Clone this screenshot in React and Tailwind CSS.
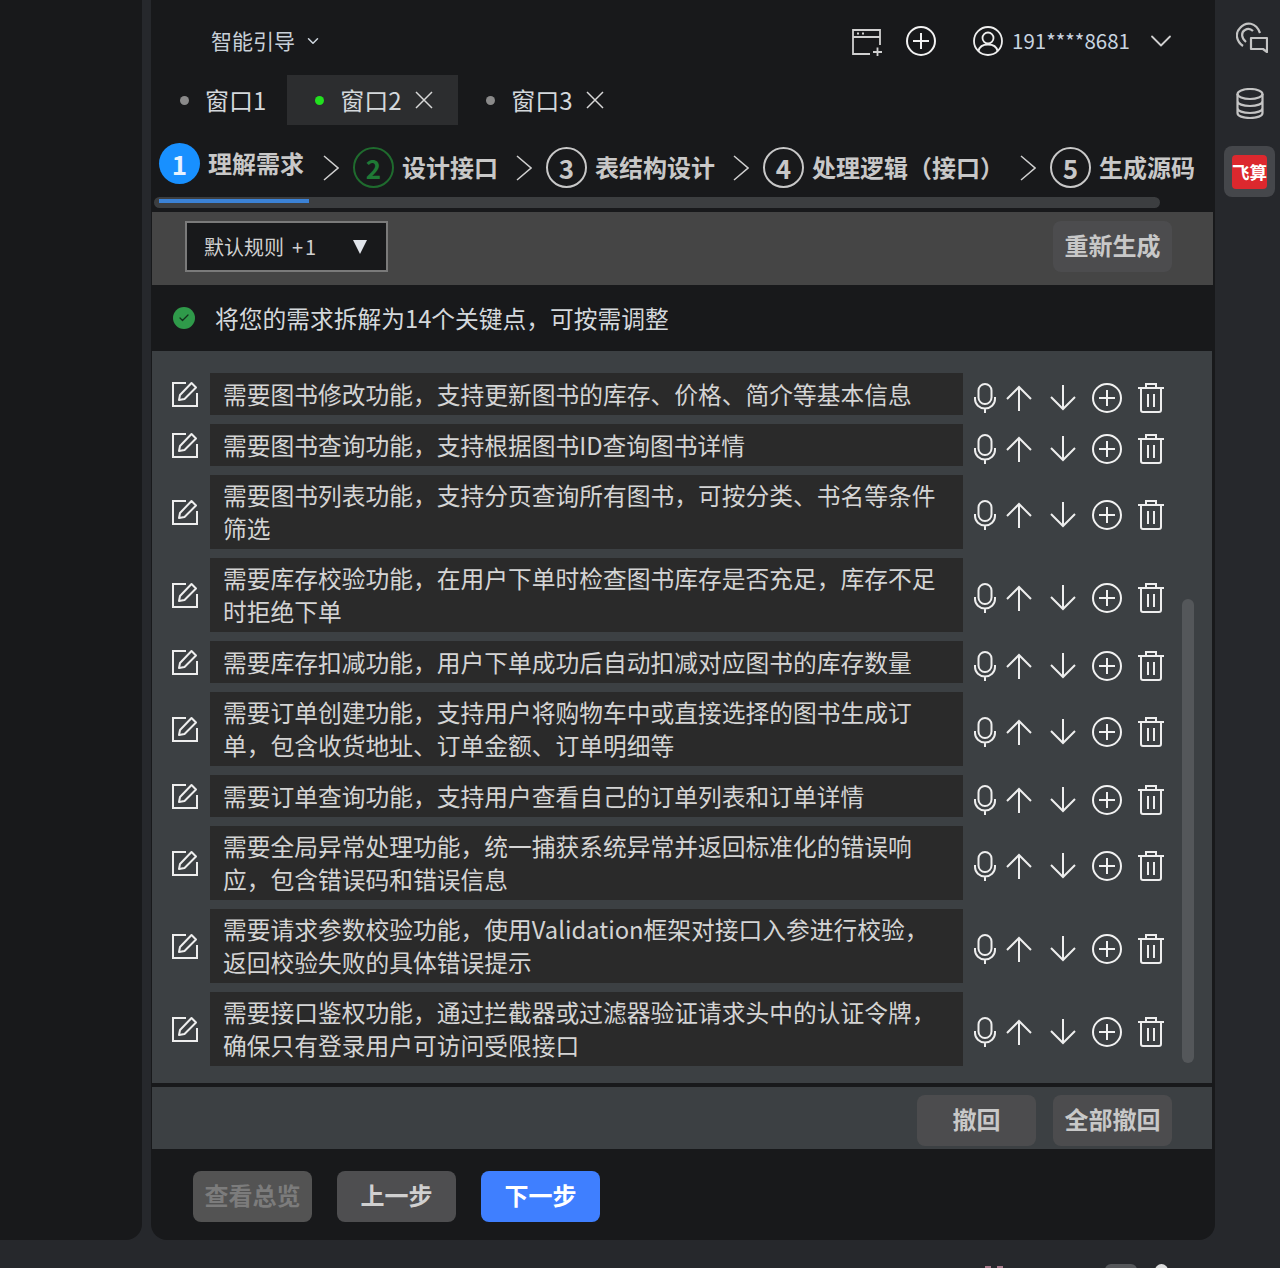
import { ChevronDown, Check } from 'lucide-react';

const steps = [
  { n: 1, label: '理解需求' },
  { n: 2, label: '设计接口' },
  { n: 3, label: '表结构设计' },
  { n: 4, label: '处理逻辑（接口）' },
  { n: 5, label: '生成源码' },
];

const items = [
  '需要图书修改功能，支持更新图书的库存、价格、简介等基本信息',
  '需要图书查询功能，支持根据图书ID查询图书详情',
  '需要图书列表功能，支持分页查询所有图书，可按分类、书名等条件筛选',
  '需要库存校验功能，在用户下单时检查图书库存是否充足，库存不足时拒绝下单',
  '需要库存扣减功能，用户下单成功后自动扣减对应图书的库存数量',
  '需要订单创建功能，支持用户将购物车中或直接选择的图书生成订单，包含收货地址、订单金额、订单明细等',
  '需要订单查询功能，支持用户查看自己的订单列表和订单详情',
  '需要全局异常处理功能，统一捕获系统异常并返回标准化的错误响应，包含错误码和错误信息',
  '需要请求参数校验功能，使用Validation框架对接口入参进行校验，返回校验失败的具体错误提示',
  '需要接口鉴权功能，通过拦截器或过滤器验证请求头中的认证令牌，确保只有登录用户可访问受限接口',
];

function EditIcon() {
  return (
    <svg width="26" height="26" viewBox="0 0 26 26" fill="none" stroke="#eeeeee" strokeWidth="2">
      <path d="M14 2H1v23h24V12" />
      <path d="M7 19l1-5L19.500 2l4.500 4.500L12.500 18z" strokeLinejoin="round" />
    </svg>
  );
}

function TrashIcon() {
  return (
    <svg width="26" height="30" viewBox="0 0 26 30" fill="none" stroke="#eeeeee" strokeWidth="2">
      <path d="M0 5h26M8 5V1h10v4M3 5v22q0 2 2 2h16q2 0 2-2V5M10 11v13M16 11v13" />
    </svg>
  );
}

function MicIcon() {
  return (
    <svg width="22" height="30" viewBox="0 0 22 30" fill="none" stroke="#eeeeee" strokeWidth="2">
      <rect x="4.500" y="1" width="13" height="20" rx="6.500" />
      <path d="M1 14v2a10 9.500 0 0 0 20 0v-2M11 25.500V30" />
    </svg>
  );
}

function UpIcon() {
  return (
    <svg width="26" height="26" viewBox="0 0 26 26" fill="none" stroke="#eeeeee" strokeWidth="2">
      <path d="M13 26V2M1 14L13 2l12 12" />
    </svg>
  );
}

function DownIcon() {
  return (
    <svg width="26" height="26" viewBox="0 0 26 26" fill="none" stroke="#eeeeee" strokeWidth="2">
      <path d="M13 0v24M1 12l12 12 12-12" />
    </svg>
  );
}

function PlusCircle() {
  return (
    <svg width="30" height="30" viewBox="0 0 30 30" fill="none" stroke="#f2f2f2" strokeWidth="2">
      <circle cx="15" cy="15" r="14" />
      <path d="M7 15h16M15 7v16" />
    </svg>
  );
}

function CloseIcon() {
  return (
    <svg width="18" height="18" viewBox="0 0 18 18" fill="none" stroke="#d8d8d8" strokeWidth="1.500">
      <path d="M1 1l16 16M17 1L1 17" />
    </svg>
  );
}

function Row({ text }) {
  const long = text.length > 31;
  return (
    <div className="flex items-center">
      <div className="w-[58px] flex justify-center pl-[8px]"><EditIcon /></div>
      <div className={`w-[753px] min-h-[42px] bg-[#2a2a2a] px-[13px] text-[23.75px] leading-[33px] text-[#d4d4d4] ${long ? 'pt-[3px] pb-[5px]' : 'pt-[4px]'}`}>{text}</div>
      <div className={`flex items-center ml-[11px] ${long ? 'mt-[6px]' : 'mt-[8px]'}`}>
        <MicIcon />
        <div className="ml-[10px] flex"><UpIcon /></div>
        <div className="ml-[18px] flex"><DownIcon /></div>
        <div className="ml-[16px] flex"><PlusCircle /></div>
        <div className="ml-[16px] flex"><TrashIcon /></div>
      </div>
    </div>
  );
}

function Step({ n, label, first, last }) {
  return (
    <>
      <div className={`flex items-center gap-[8px] ${first ? 'mb-[8px]' : ''}`}>
        <div className={`w-[41px] h-[41px] rounded-full flex items-center justify-center text-[26px] font-semibold ${
          first ? 'bg-[#1890ff] text-[#e6f2ff]' : n === 2 ? 'border-2 border-[#1f6b2e] text-[#1f7a35]' : 'border-2 border-[#c8c8c8] text-[#c8c8c8]'
        }`}>{n}</div>
        <span className="pb-[2px] text-[24px] font-bold text-[#c8c8c8] whitespace-nowrap">{label}</span>
      </div>
      {!last && (
        <svg width="16" height="26" viewBox="0 0 16 26" fill="none" stroke="#d0d0d0" strokeWidth="1.500" className={`shrink-0 mr-[14px] ${n === 4 ? 'ml-[16px]' : n === 1 ? 'ml-[19px]' : 'ml-[18px]'}`}>
          <path d="M1 1l14 12L1 25" />
        </svg>
      )}
    </>
  );
}

function GreyButton({ children }) {
  return (
    <button className="w-[119px] h-[51px] pb-[3px] rounded-lg bg-[#4c4c4e] text-[24px] font-bold text-[#c8c8c8]">{children}</button>
  );
}

export default function App() {
  return (
    <div className="relative w-[1280px] h-[1268px] overflow-hidden flex bg-[#26282c] font-['Noto_Sans_CJK_SC',sans-serif]">
      <aside className="w-[142px] h-[1240px] bg-[#18191b] rounded-br-2xl shrink-0" />

      <main className="w-[1064px] h-[1240px] ml-[9px] bg-[#18191b] rounded-b-2xl flex flex-col shrink-0">
        <header className="h-[75px] pt-[25px] flex items-start text-[#d0d8e0]">
          <span className="ml-[60px] text-[21px] leading-[30px] text-[#c8d0d8]">智能引导</span>
          <ChevronDown size={18} className="ml-[9px] mt-[7px]" />
          <svg width="31" height="28" viewBox="0 0 31 28" fill="none" stroke="#d0d0d0" strokeWidth="1.800" className="ml-[530px] mt-[3px]">
            <path d="M28 17V2H1v24h17M1 9h27M21 24h9M25.500 19.500v8.500" />
            <path d="M5 5.500h2M10 5.500h2" />
          </svg>
          <div className="ml-[23px] mt-[1px] flex"><PlusCircle /></div>
          <svg width="30" height="30" viewBox="0 0 30 30" fill="none" stroke="#eeeeee" strokeWidth="1.800" className="ml-[37px] mt-[1px]">
            <circle cx="15" cy="15" r="14" />
            <circle cx="15" cy="12" r="5.500" />
            <path d="M5.500 25c1-5 5-6.500 9.500-6.500s8.500 1.500 9.500 6.500" />
          </svg>
          <span className="ml-[9px] text-[20.500px] leading-[30px] text-[#c8d4e0] whitespace-nowrap">191****8681</span>
          <ChevronDown size={36} strokeWidth={1.200} className="ml-[13px] -mt-[2px] text-[#d0d0d0]" />
        </header>

        <nav className="h-[50px] flex items-center text-[24px] text-[#d4d8dc]">
          <div className="flex items-center ml-[29px]">
            <span className="w-[9px] h-[9px] rounded-full bg-[#8a8a8a]" />
            <span className="ml-[16px]">窗口1</span>
          </div>
          <div className="h-full w-[171px] ml-[21px] bg-[#2c2d2f] flex items-center">
            <span className="ml-[28px] w-[9px] h-[9px] rounded-full bg-[#22e01f]" />
            <span className="ml-[16px]">窗口2</span>
            <div className="ml-[13px] flex"><CloseIcon /></div>
          </div>
          <div className="flex items-center ml-[28px]">
            <span className="w-[9px] h-[9px] rounded-full bg-[#8a8a8a]" />
            <span className="ml-[16px]">窗口3</span>
            <div className="ml-[13px] flex"><CloseIcon /></div>
          </div>
        </nav>

        <div className="h-[72px] pl-[8px] flex items-center pt-[13px]">
          {steps.map((s, i) => (
            <Step key={s.n} n={s.n} label={s.label} first={i === 0} last={i === steps.length - 1} />
          ))}
        </div>

        <div className="h-[12px] pl-[3px]">
          <div className="w-[1006px] h-[11px] rounded-full bg-[#3c3e40] pl-[5px] pt-[2px]">
            <div className="w-[150px] h-[4px] bg-[#3b82d6]" />
          </div>
        </div>

        <div className="h-[3px]" />

        <section className="h-[73px] ml-[1px] w-[1061px] bg-[#454545] flex items-start justify-between pl-[33px] pr-[41px] pt-[9px]">
          <div className="w-[203px] h-[51px] bg-[#18191b] border-2 border-[#7a7a7a] flex items-center pl-[17px] text-[#d0d0d0]">
            <span className="text-[20px]">默认规则</span>
            <span className="ml-[8px] text-[20px] tracking-[2px]">+1</span>
            <span className="ml-[35px] w-0 h-0 border-x-[7px] border-x-transparent border-t-[14px] border-t-[#e0e4ea]" />
          </div>
          <GreyButton>重新生成</GreyButton>
        </section>

        <div className="h-[66px] flex items-center pl-[22px] text-[23.75px] text-[#d4d8dc]">
          <span className="w-[22px] h-[22px] rounded-full bg-[#2f9a4a] flex items-center justify-center">
            <Check size={12} strokeWidth={2.500} className="text-[#12301c]" />
          </span>
          <span className="ml-[20px]">将您的需求拆解为14个关键点，可按需调整</span>
        </div>

        <div className="relative ml-[1px] w-[1060px] h-[732px] bg-[#3c4043] pt-[22px] flex flex-col gap-[9px]">
          {items.map(t => <Row key={t} text={t} />)}
          <div className="absolute left-[1030px] top-[248px] w-[12px] h-[464px] rounded-full bg-[#54575a]" />
        </div>

        <div className="h-[4px]" />

        <div className="ml-[1px] w-[1060px] h-[62px] bg-[#3c4043] flex justify-end gap-[17px] pt-[8px] pr-[40px]">
          <GreyButton>撤回</GreyButton>
          <GreyButton>全部撤回</GreyButton>
        </div>

        <div className="flex gap-[25px] pl-[42px] pt-[22px]">
          <button className="w-[119px] h-[51px] pb-[3px] rounded-lg bg-[#535353] text-[24px] font-bold text-[#7c7c7c]">查看总览</button>
          <button className="w-[119px] h-[51px] pb-[3px] rounded-lg bg-[#4e4e50] text-[24px] font-bold text-[#d0d0d0]">上一步</button>
          <button className="w-[119px] h-[51px] pb-[3px] rounded-lg bg-[#3f7fff] text-[24px] font-bold text-white">下一步</button>
        </div>
      </main>

      <aside className="flex-1 flex flex-col items-center pt-[22px]">
        <svg width="32" height="31" viewBox="0 0 32 31" fill="none" stroke="#c4c4c4" strokeWidth="2.200" className="ml-[8px]">
          <path d="M7 24C0 19-1 11 4 6c6-7 16-6 20 5" />
          <path d="M10 20C5 16 5 10 9 8c3-2 6-1 8 1" />
          <path d="M15 16h16v14l-4-3H15z" strokeLinejoin="round" />
        </svg>
        <svg width="28" height="31" viewBox="0 0 28 31" fill="none" stroke="#c4c4c4" strokeWidth="2.200" className="mt-[35px] ml-[4px]">
          <ellipse cx="14" cy="6" rx="12.500" ry="5" />
          <path d="M1.500 6v19c0 3 5.500 5 12.500 5s12.500-2 12.500-5V6M1.500 13c0 3 5.500 5 12.500 5s12.500-2 12.500-5M1.500 20c0 3 5.500 5 12.500 5s12.500-2 12.500-5" />
        </svg>
        <div className="mt-[27px] ml-[4px] w-[51px] h-[51px] rounded-lg bg-[#45474b] flex items-center justify-center">
          <div className="w-[35px] h-[34px] rounded bg-[#dc282e] text-white text-[17.500px] leading-[34px] font-bold text-center whitespace-nowrap">飞算</div>
        </div>
      </aside>

      <div className="absolute left-[985px] top-[1266px] w-[6px] h-[6px] bg-[#a87c8c]" />
      <div className="absolute left-[997px] top-[1266px] w-[6px] h-[6px] bg-[#a87c8c]" />
      <div className="absolute left-[1105px] top-[1264px] w-[32px] h-[12px] rounded-full bg-[#55575a]" />
      <div className="absolute left-[1155px] top-[1264px] w-[13px] h-[13px] rounded-full bg-[#dddddd]" />
    </div>
  );
}
